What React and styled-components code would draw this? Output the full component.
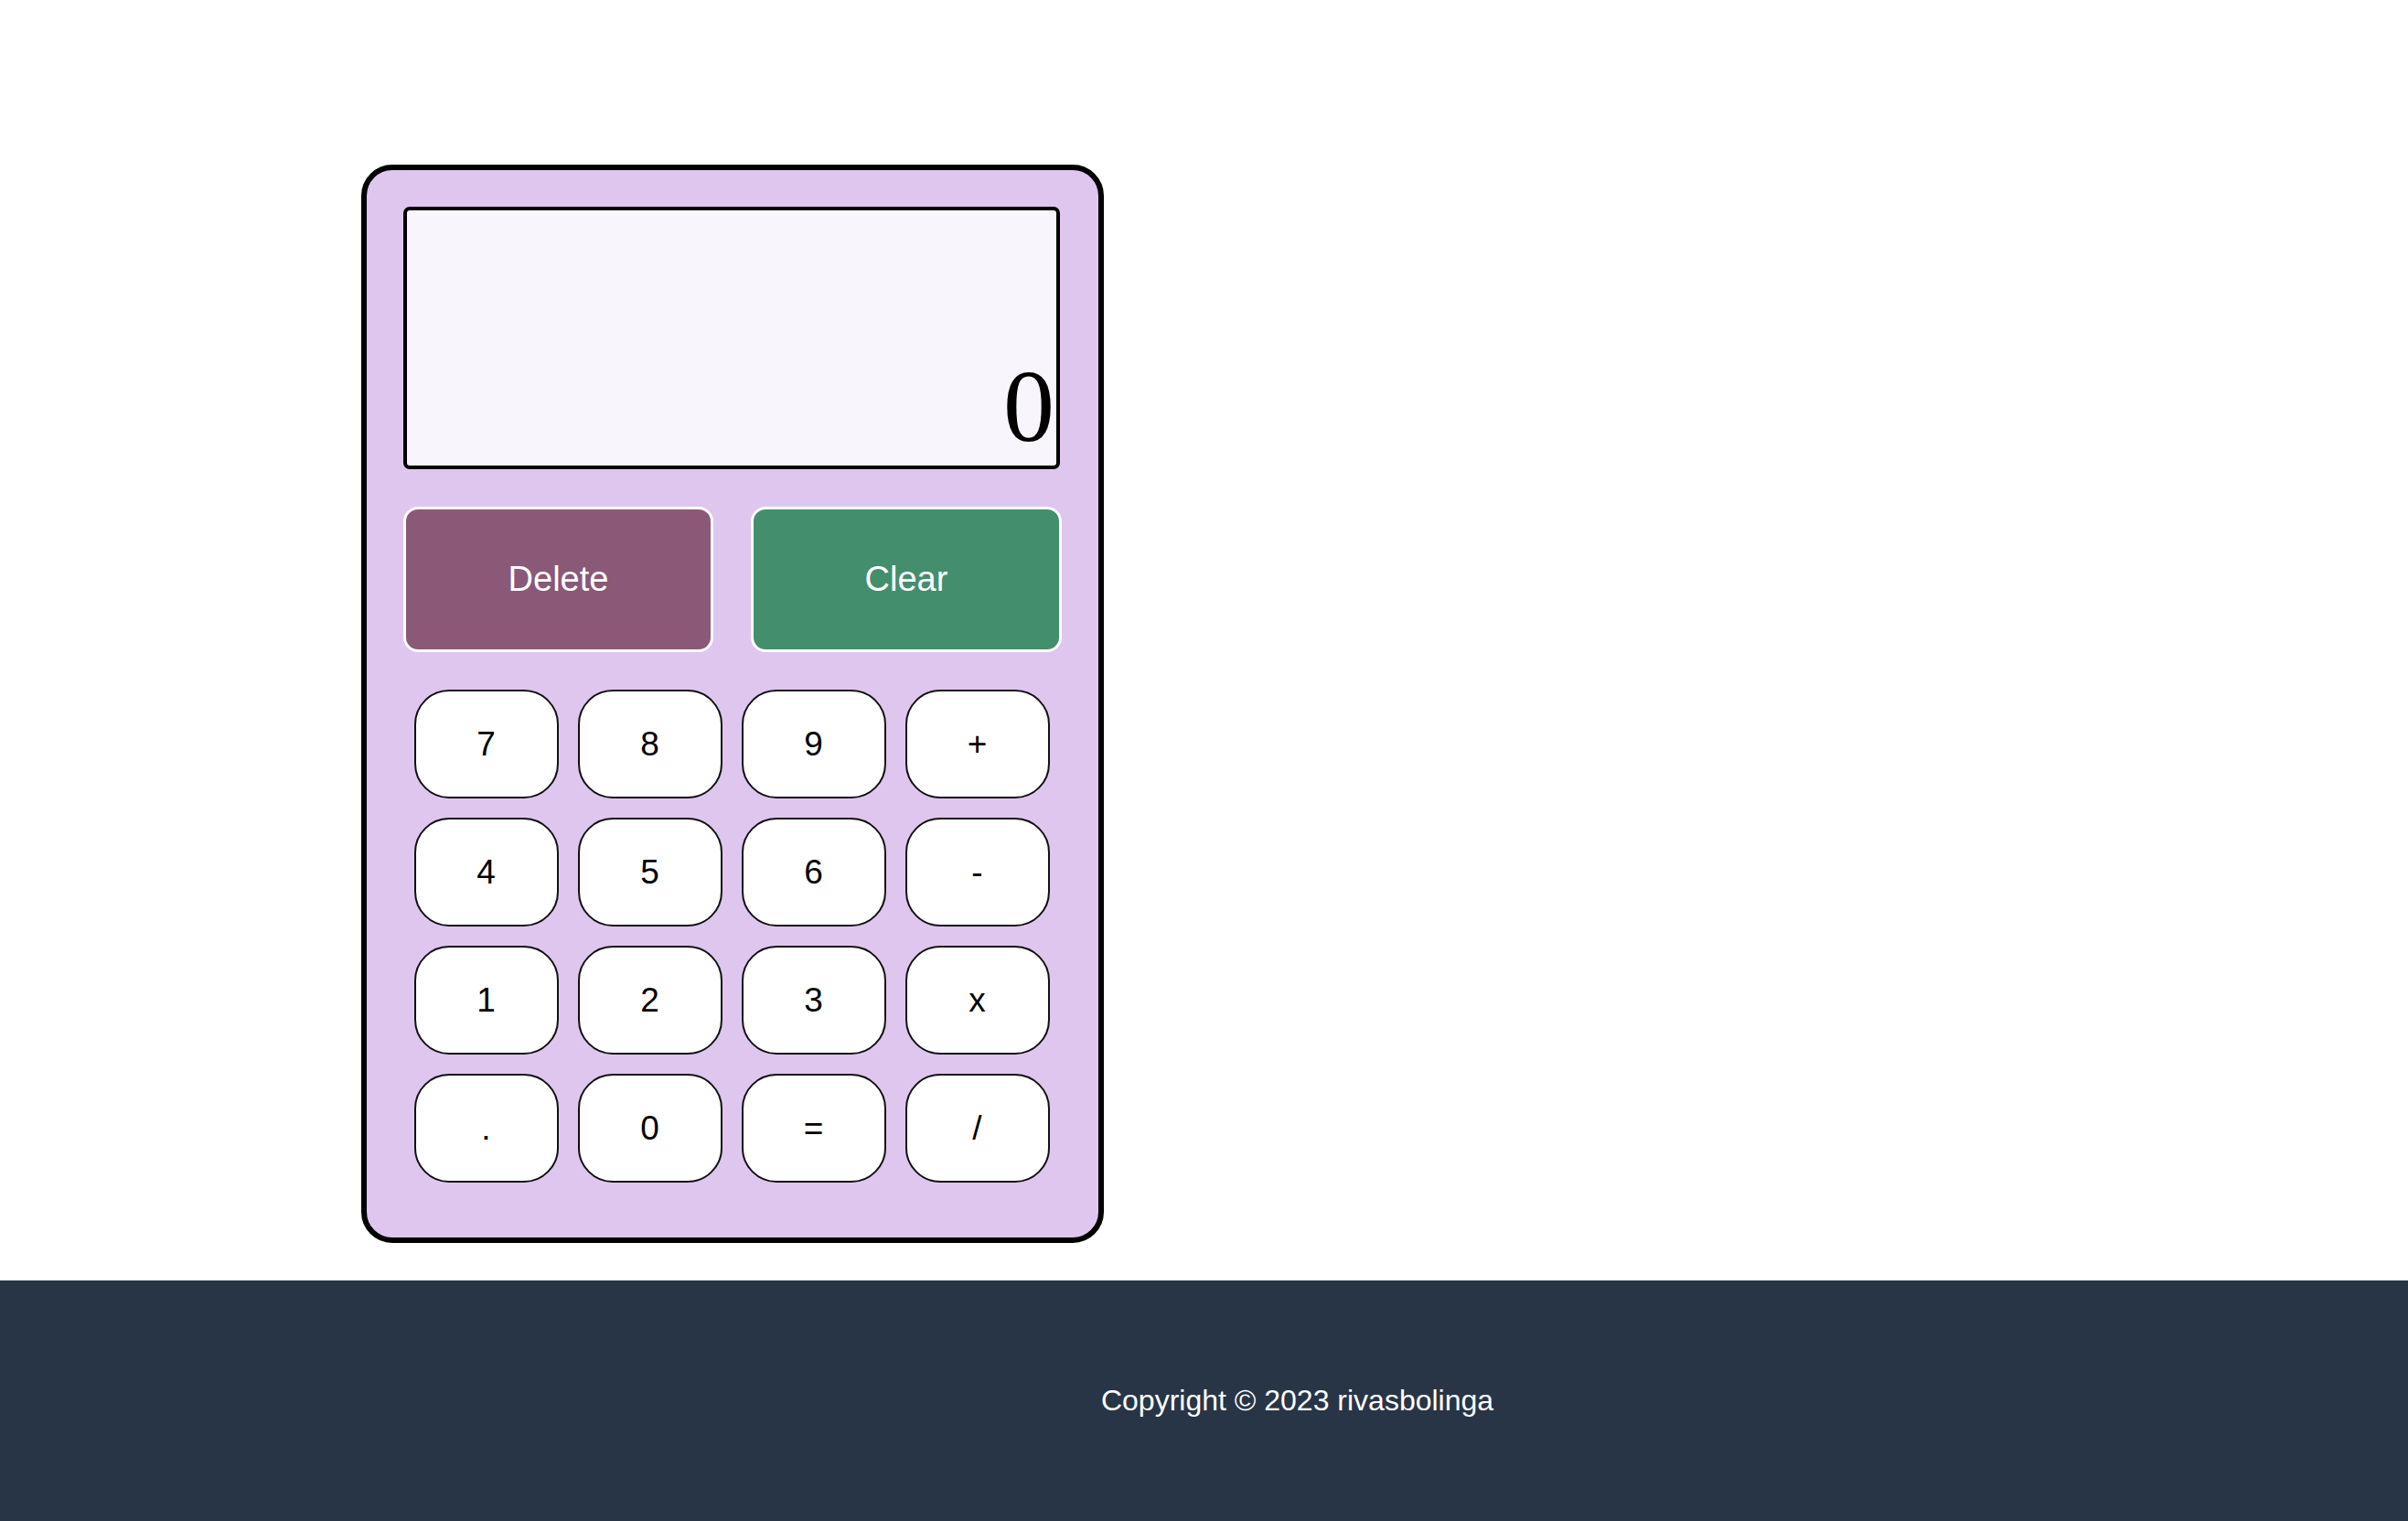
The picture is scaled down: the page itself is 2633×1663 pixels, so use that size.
import React, { useState } from "react";
import styled, { createGlobalStyle } from "styled-components";

const GlobalStyle = createGlobalStyle`
  * {
    box-sizing: border-box;
  }
  body {
    margin: 0;
    background: #ffffff;
    font-family: "Liberation Sans", Arial, sans-serif;
  }
`;

const Page = styled.div`
  min-height: 1663px;
  display: flex;
  flex-direction: column;
`;

const Main = styled.main`
  flex: 1;
  padding: 180px 0 41px 395px;
`;

const Calculator = styled.div`
  width: 812px;
  background-color: #dfc6ef;
  border: 6px solid #000;
  border-radius: 34px;
  padding: 40px 40px 60px 40px;
`;

const Screen = styled.div`
  width: 718px;
  height: 287px;
  background-color: #f8f6fc;
  border: 4px solid #000;
  border-radius: 7px;
  display: flex;
  align-items: flex-end;
  justify-content: flex-end;
  padding-right: 2px;
  font-family: "Liberation Serif", "Times New Roman", serif;
  font-size: 112px;
  line-height: 1.15;
  color: #000;
  overflow: hidden;
`;

const Actions = styled.div`
  display: grid;
  grid-template-columns: 339px 340px;
  column-gap: 41px;
  margin-top: 41px;
`;

const ActionButton = styled.button`
  height: 159px;
  border: 3px solid #fff;
  border-radius: 16px;
  background-color: ${(p) => p.$bg};
  color: #fff;
  font-family: "Liberation Sans", Arial, sans-serif;
  font-size: 38px;
  cursor: pointer;
`;

const Keypad = styled.div`
  display: grid;
  grid-template-columns: repeat(4, 158px);
  grid-auto-rows: 119px;
  column-gap: 21px;
  row-gap: 21px;
  justify-content: center;
  margin: 41px 0 0 -2px;
`;

const Key = styled.button`
  background-color: #fff;
  border: 2px solid #111;
  border-radius: 38px;
  color: #000;
  font-family: "Liberation Sans", Arial, sans-serif;
  font-size: 37px;
  cursor: pointer;
`;

const Footer = styled.footer`
  height: 263px;
  background-color: #283547;
  display: flex;
  align-items: center;
  justify-content: center;
  padding-left: 204px;
`;

const FooterText = styled.p`
  margin: 0;
  color: #fff;
  font-family: "Liberation Sans", Arial, sans-serif;
  font-size: 32px;
`;

const keys = ["7", "8", "9", "+", "4", "5", "6", "-", "1", "2", "3", "x", ".", "0", "=", "/"];

const App = () => {
  const [value] = useState("0");
  return (
    <>
      <GlobalStyle />
      <Page>
        <Main>
          <Calculator>
            <Screen>{value}</Screen>
            <Actions>
              <ActionButton $bg="#895977">Delete</ActionButton>
              <ActionButton $bg="#438e6d">Clear</ActionButton>
            </Actions>
            <Keypad>
              {keys.map((k) => (
                <Key key={k}>{k}</Key>
              ))}
            </Keypad>
          </Calculator>
        </Main>
        <Footer>
          <FooterText>Copyright © 2023 rivasbolinga</FooterText>
        </Footer>
      </Page>
    </>
  );
};

export default App;
